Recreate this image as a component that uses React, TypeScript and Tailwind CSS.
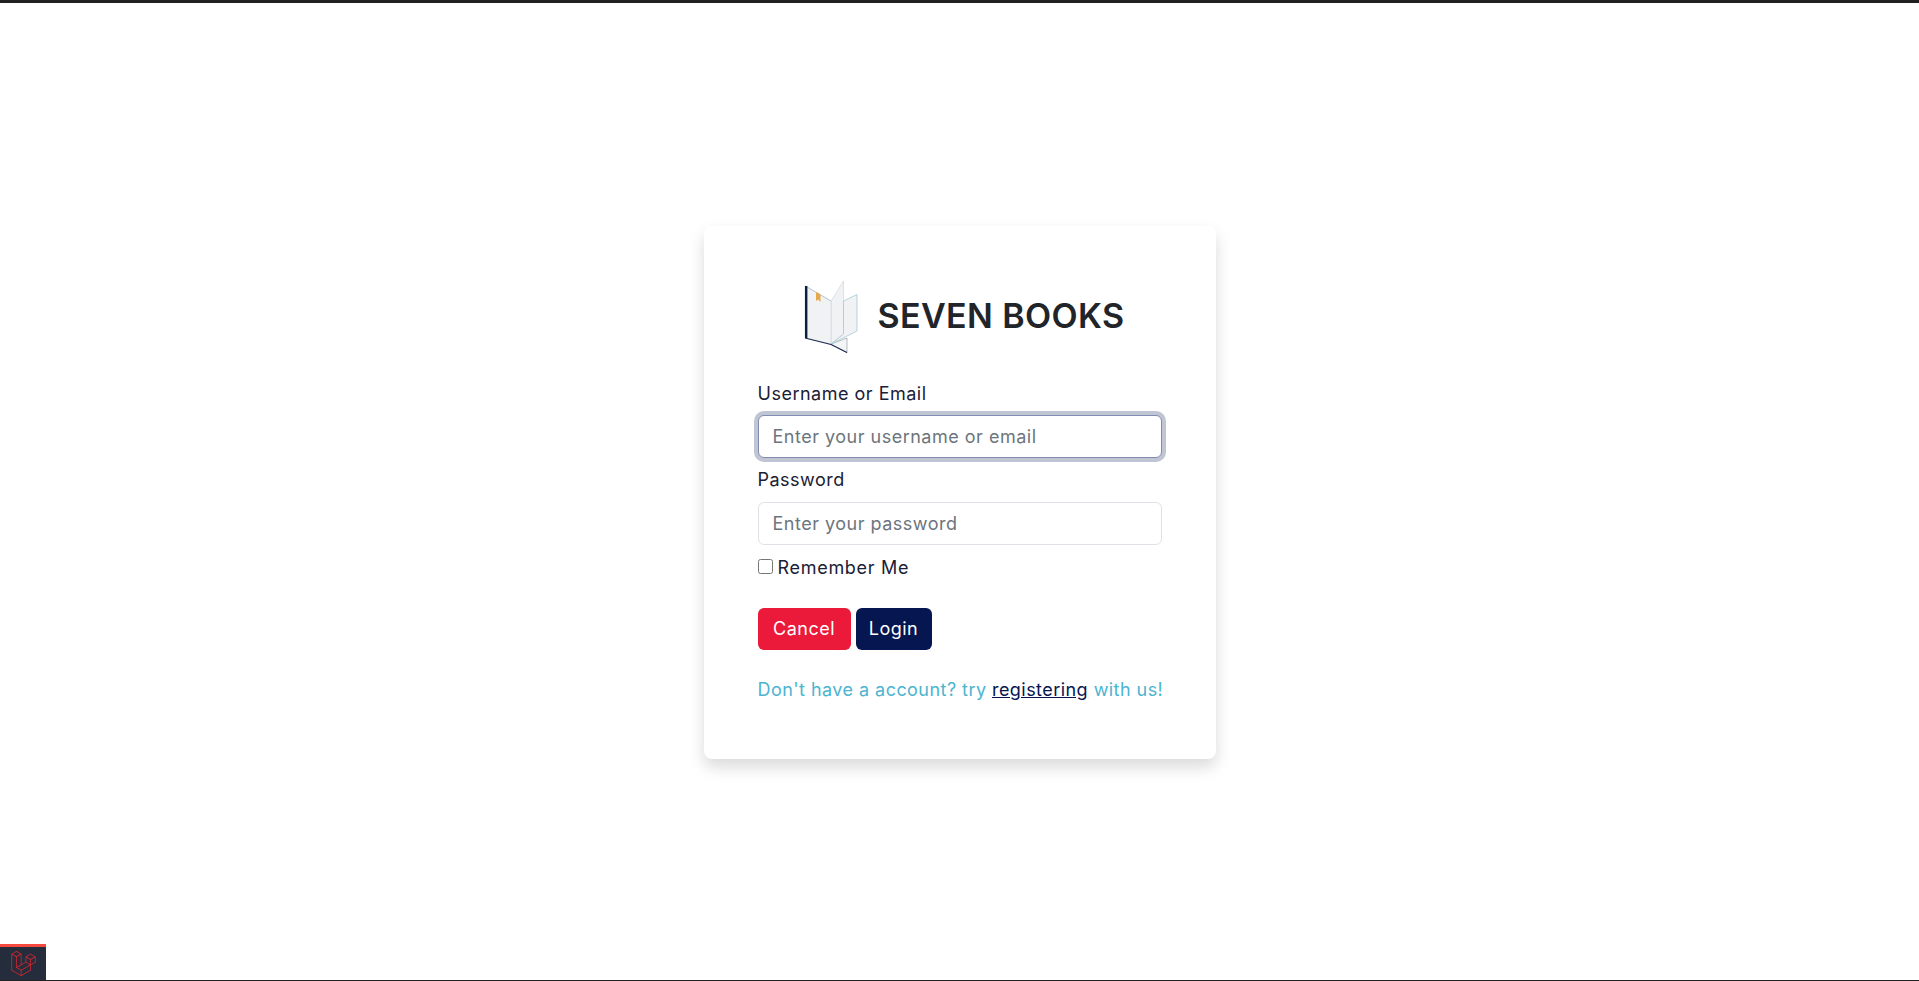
import { FaLaravel } from 'react-icons/fa';

function BookLogo() {
  return (
    <svg viewBox="0 0 70 80" className="h-[80px] w-[70px] shrink-0">
      {/* back cover */}
      <polygon points="37,68 53,62 53,77" fill="#f4f5f6" stroke="#8a919c" strokeWidth="0.6" />
      {/* right pages */}
      <polygon points="37,25 49.5,5 49.5,58 37,68" fill="#f1f2f3" stroke="#c9d3da" strokeWidth="0.6" />
      <polygon points="49.5,25 63,18.5 63,55 37,68 49.5,58" fill="#f1f2f3" stroke="#9cc3d2" strokeWidth="0.7" />
      {/* left page */}
      <polygon points="11,10 37,25 37,68 11,62" fill="#f1f2f3" stroke="#c9d3da" strokeWidth="0.6" />
      <line x1="11.5" y1="10" x2="37" y2="25" stroke="#a9bccb" strokeWidth="0.7" />
      {/* bookmark */}
      <polygon points="22,16 26.5,18.5 26.5,26 24.2,23.5 22,25" fill="#e6a84c" />
      {/* spine and bottom edge */}
      <rect x="11" y="10" width="2.4" height="52" fill="#0b1f3f" />
      <polyline points="11,62 37,68.5 53,76.5" fill="none" stroke="#1c2c50" strokeWidth="1.1" />
    </svg>
  );
}

export default function App() {
  return (
    <div className="relative flex min-h-[981px] flex-col bg-white font-['Inter',sans-serif] tracking-[0.5px]">
      <div className="h-[3px] bg-[#212121]" />

      <main className="flex flex-1 items-center justify-center pt-[1px]">
        <div className="h-[533px] w-[512px] rounded-lg bg-white px-[54px] pt-[50px] shadow-[0_8px_16px_rgba(0,0,0,0.15)]">
          <div className="flex items-center justify-center gap-[13px]">
            <BookLogo />
            <h1 className="whitespace-nowrap text-[34px] font-semibold tracking-[0.4px] text-[#212529]">SEVEN BOOKS</h1>
          </div>

          <form className="mt-[26px]">
            <label className="mb-[9px] block text-[18px] leading-6 text-[#1a2035]">Username or Email</label>
            <input
              type="text"
              placeholder="Enter your username or email"
              className="mb-[10px] block h-[43px] w-full rounded-md border border-[#828bb0] bg-white px-[14px] text-[18px] text-[#212529] shadow-[0_0_0_4px_rgba(5,22,80,0.25)] outline-none placeholder:text-[#6c757d]"
            />

            <label className="mb-[10px] block text-[18px] leading-6 text-[#1a2035]">Password</label>
            <input
              type="password"
              placeholder="Enter your password"
              className="mb-[11px] block h-[43px] w-full rounded-md border border-[#dee2e6] bg-white px-[14px] text-[18px] text-[#212529] outline-none placeholder:text-[#6c757d]"
            />

            <div className="flex h-6 items-center gap-[5px]">
              <input type="checkbox" className="mt-[-2px] h-[15px] w-[15px]" />
              <span className="text-[18px] tracking-[0.7px] text-[#1a2035]">Remember Me</span>
            </div>

            <div className="mt-[28px] flex gap-[5px]">
              <button type="button" className="h-[42px] w-[93px] rounded-md bg-[#eb1a3a] text-[18px] text-white">
                Cancel
              </button>
              <button type="button" className="h-[42px] w-[76px] rounded-md bg-[#051650] text-[18px] text-white">
                Login
              </button>
            </div>

            <p className="mt-[28px] whitespace-nowrap text-[18px] leading-6 tracking-[0.45px] text-[#4bb4cf]">
              Don't have a account? try{' '}
              <a href="#" className="text-[#051650] underline">
                registering
              </a>{' '}
              with us!
            </p>
          </form>
        </div>
      </main>

      <div className="h-[1px] bg-[#212121]" />

      {/* debugbar tab */}
      <div className="absolute bottom-[1px] left-0 flex h-[36px] w-[46px] items-center justify-center border-t-[3px] border-[#f4493c] bg-[#252c3b]">
        <FaLaravel className="h-[25px] w-[25px] text-[#d3272f]" />
      </div>
    </div>
  );
}
